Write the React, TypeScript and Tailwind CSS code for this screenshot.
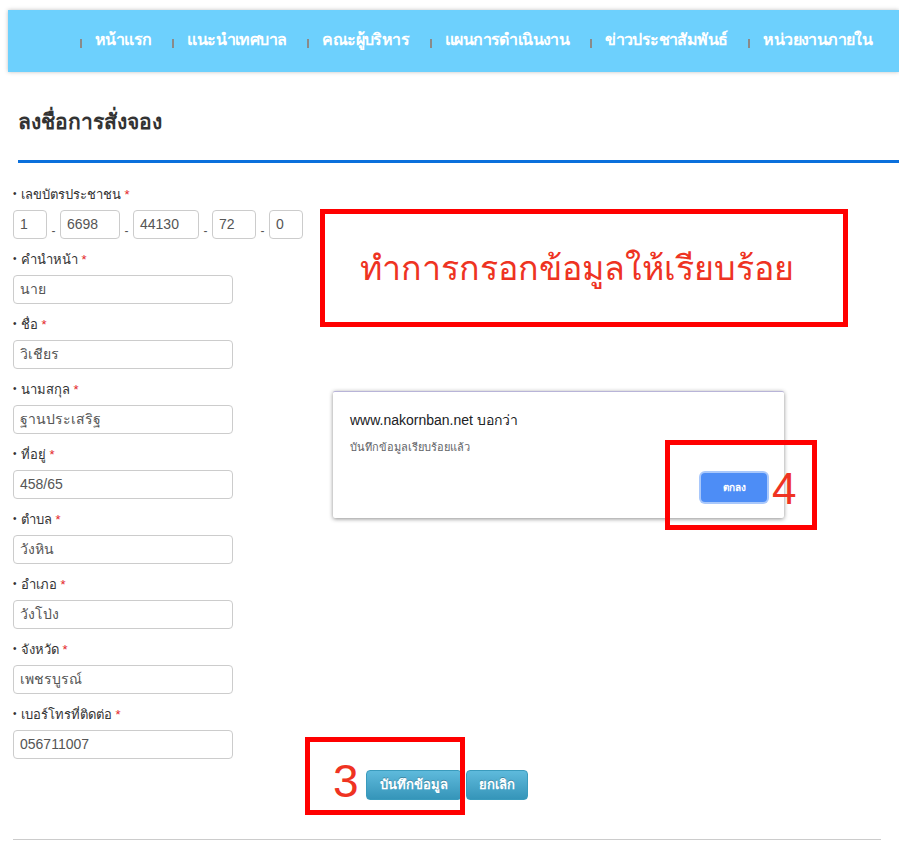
import React from 'react';

const navItems = ['หน้าแรก', 'แนะนำเทศบาล', 'คณะผู้บริหาร', 'แผนการดำเนินงาน', 'ข่าวประชาสัมพันธ์', 'หน่วยงานภายใน'];

const fields = [
  { label: 'คำนำหน้า', value: 'นาย' },
  { label: 'ชื่อ', value: 'วิเชียร' },
  { label: 'นามสกุล', value: 'ฐานประเสริฐ' },
  { label: 'ที่อยู่', value: '458/65' },
  { label: 'ตำบล', value: 'วังหิน' },
  { label: 'อำเภอ', value: 'วังโป่ง' },
  { label: 'จังหวัด', value: 'เพชรบูรณ์' },
  { label: 'เบอร์โทรที่ติดต่อ', value: '056711007' },
];

const idParts = [
  { v: '1', w: 'w-[34px]' },
  { v: '6698', w: 'w-[60px]' },
  { v: '44130', w: 'w-[66px]' },
  { v: '72', w: 'w-[44px]' },
  { v: '0', w: 'w-[34px]' },
];

const Label = ({ text }: { text: string }) => (
  <div className="h-[16px] flex items-center text-[13px] text-[#333] leading-none">
    <span className="text-[10px] mr-[4px]">•</span>
    {text}
    <span className="text-[#e3262b] ml-[4px]">*</span>
  </div>
);

const Box = ({ value, w }: { value: string; w: string }) => (
  <div className={`${w} h-[29px] border border-[#cccccc] rounded-[4px] px-[6px] flex items-center text-[14px] text-[#555] bg-white`}>
    {value}
  </div>
);

export default function App() {
  return (
    <div className="relative w-full h-[867px] bg-white overflow-hidden font-['Liberation_Sans',Tahoma,sans-serif]">
      {/* nav */}
      <div className="pt-[10px] pl-[8px]">
        <nav className="h-[62px] bg-[#6dd0fd] shadow-[0_0_4px_rgba(0,0,0,0.25)] flex items-center pl-[72px] pb-[2px] whitespace-nowrap overflow-hidden">
          {navItems.map((t) => (
            <div key={t} className="flex items-center">
              <span className="w-[2px] h-[9px] bg-[#8a8a8a] mt-[6px]" />
              <span className="ml-[13px] mr-[21px] text-white font-bold text-[16px] tracking-[-0.6px]">{t}</span>
            </div>
          ))}
        </nav>
      </div>

      {/* title */}
      <div className="pl-[18px]">
        <h1 className="mt-[36px] text-[21px] font-bold text-[#333] leading-[28px]">ลงชื่อการสั่งจอง</h1>
        <div className="mt-[24px] h-[3px] bg-[#0b70dc]" />
      </div>

      {/* form */}
      <div className="pl-[13px] pt-[23px] w-[320px]">
        <Label text="เลขบัตรประชาชน" />
        <div className="mt-[8px] flex items-end">
          {idParts.map((p, i) => (
            <React.Fragment key={i}>
              {i > 0 && <span className="w-[13px] text-center text-[12px] text-[#555] leading-none pb-[2px]">-</span>}
              <Box value={p.v} w={p.w} />
            </React.Fragment>
          ))}
        </div>
        {fields.map((f) => (
          <div key={f.label} className="mt-[12px]">
            <Label text={f.label} />
            <div className="mt-[8px]">
              <Box value={f.value} w="w-[220px]" />
            </div>
          </div>
        ))}
      </div>

      {/* buttons */}
      <div className="mt-[11px] pl-[366px] flex gap-[4px]">
        <button className="h-[30px] w-[96px] rounded-[4px] bg-gradient-to-b from-[#5ebadc] to-[#3595b9] text-white font-bold text-[13px] border border-[#3a9bbd] [text-shadow:0_-1px_0_rgba(0,0,0,0.25)]">
          บันทึกข้อมูล
        </button>
        <button className="h-[30px] w-[62px] rounded-[4px] bg-gradient-to-b from-[#5ebadc] to-[#3595b9] text-white font-bold text-[13px] border border-[#3a9bbd] [text-shadow:0_-1px_0_rgba(0,0,0,0.25)]">
          ยกเลิก
        </button>
      </div>

      <div className="mt-[39px] ml-[13px] w-[868px] h-px bg-[#cccccc]" />

      {/* annotation 1 */}
      <div className="absolute left-[320px] top-[209px] w-[528px] h-[118px] border-[5px] border-[#ff0000] flex items-center pl-[35px]">
        <span className="text-[#ee3322] text-[34px] leading-none">ทำการกรอกข้อมูลให้เรียบร้อย</span>
      </div>

      {/* alert dialog */}
      <div className="absolute left-[333px] top-[391px] w-[451px] h-[127px] bg-white rounded-[2px] border-t border-[#b8b4d8] shadow-[0_1px_4px_rgba(0,0,0,0.45)]">
        <div className="pl-[17px] pt-[21px] text-[14px] text-[#202124] leading-none">www.nakornban.net บอกว่า</div>
        <div className="pl-[17px] pt-[15px] text-[11px] text-[#5f6368] leading-none">บันทึกข้อมูลเรียบร้อยแล้ว</div>
        <button className="absolute left-[368px] top-[81px] w-[66px] h-[29px] rounded-[4px] bg-[#4d8df6] ring-2 ring-[#a9c8fb] text-white text-[10px] font-bold">
          ตกลง
        </button>
      </div>

      {/* annotation 4 */}
      <div className="absolute left-[665px] top-[440px] w-[152px] h-[90px] border-[5px] border-[#ff0000]">
        <span className="absolute left-[102px] top-[22px] text-[#ef3322] text-[44px] leading-none">4</span>
      </div>

      {/* annotation 3 */}
      <div className="absolute left-[305px] top-[737px] w-[160px] h-[78px] border-[5px] border-[#ff0000]">
        <span className="absolute left-[23px] top-[16px] text-[#ef3322] text-[46px] leading-none">3</span>
      </div>
    </div>
  );
}
